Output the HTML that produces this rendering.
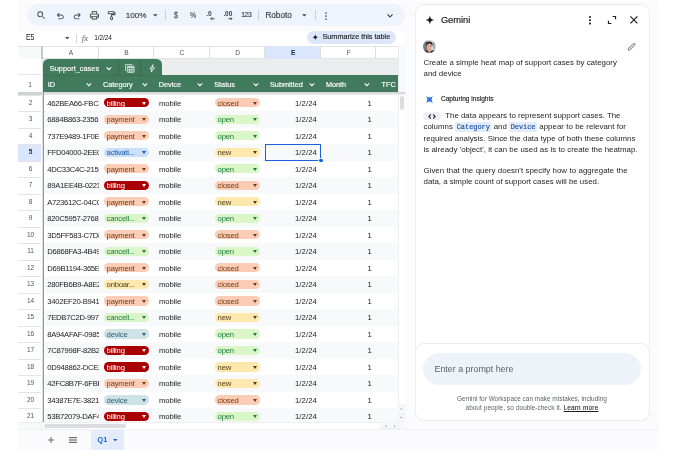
<!DOCTYPE html>
<html lang="en">
<head>
<meta charset="utf-8">
<title>Support cases - Sheets</title>
<style>
*{box-sizing:border-box;margin:0;padding:0}
html,body{width:679px;height:460px;overflow:hidden;background:#fff}
body{position:relative;font-family:"Liberation Sans",sans-serif;color:#1f1f1f;-webkit-font-smoothing:antialiased}
.abs{position:absolute}
#root{position:absolute;left:0;top:0;width:679px;height:460px;will-change:transform;transform:translateZ(0);filter:blur(.3px)}
#app{position:absolute;left:18px;top:.8px;width:641px;height:449.2px;background:#fbfbfd}
#tb{position:absolute;left:26.5px;top:4.2px;width:378px;height:22px;border-radius:11px;background:#eff3fc}
.tbt{position:absolute;top:4.2px;height:22px;line-height:22px;font-size:7.6px;color:#3c4043;white-space:nowrap;-webkit-text-stroke:.15px #3c4043}
.sep{position:absolute;width:1px;background:#cdd1d7}
svg{position:absolute;overflow:visible}
#fbar{position:absolute;left:18px;top:30.5px;width:387px;height:15.8px;background:#fff}
#colh{position:absolute;left:18px;top:46.3px;width:380.4px;height:12.8px;background:#fff;border-top:1px solid #e1e3e6;border-bottom:1px solid #e1e3e6}
.ch{position:absolute;top:46.3px;height:12.8px;line-height:14.6px;font-size:6.6px;color:#50555a;padding-left:1.4px;text-align:center;border-right:1px solid #dcdfe3}
#grid{position:absolute;left:43px;top:59.1px;width:355.4px;height:365.6px;background:#fff;overflow:hidden}
.row{position:absolute;left:18px;width:380.4px;height:16.51px}
.row.band:before{content:"";position:absolute;left:25px;right:0;top:0;bottom:0;background:#f8f9fb}
.rh{position:absolute;left:0;top:0;width:23px;height:16.51px;line-height:18px;text-align:center;font-size:6.2px;padding-left:1px;color:#444;background:#fff;border-top:1px solid #e1e3e6}
.rh.selrow{background:#dae6fb;color:#0b2f66;font-weight:bold}
.t{position:absolute;left:0;width:380px;height:16px}
.cell{position:absolute;top:0;height:16.51px;line-height:16.9px;font-size:7.7px;white-space:nowrap;overflow:hidden;color:#202124}
.id{left:29.3px;width:51.5px;letter-spacing:-0.3px}
.dev{left:141px;width:40px;letter-spacing:-0.08px}
.sub{left:250px;width:49px;text-align:right;letter-spacing:.12px}
.mon{left:310px;width:43.9px;text-align:right}
.chip{position:absolute;top:3.75px;height:9.1px;width:45.4px;border-radius:4.6px;font-size:7.3px;line-height:8.9px;white-space:nowrap}
.ct,.ct2{background:none !important;width:33px;overflow:visible;letter-spacing:-0.22px}
.ct{left:88.6px}
.ct2{left:199.6px}
.rn{left:0;top:-1px;width:24px;text-align:center;font-size:6.5px;color:#50555a;padding-left:1px}
.rn.selrow{color:#0b2f66;font-weight:bold}
.chip i{position:absolute;right:3px;top:3.3px;width:0;height:0;border-left:2.7px solid transparent;border-right:2.7px solid transparent;border-top:3.1px solid currentColor}
.cat{left:85.5px}
.st{left:196.5px}
.c-red{background:#aa0004;color:#fff}
.c-or{background:#fbcdb6;color:#753a12}
.c-bl{background:#cbdff6;color:#1558b0}
.c-gr{background:#daf5c6;color:#1a7a45}
.c-ye{background:#fde9ad;color:#4d3d1d}
.c-cy{background:#cee3e7;color:#2a6173}
.hd{position:absolute;top:75.8px;height:17.5px;line-height:17.6px;font-size:7.3px;color:#fff;white-space:nowrap;-webkit-text-stroke:0.15px #fff}
#gem{position:absolute;left:414.5px;top:4.4px;width:235px;height:416.6px;border-radius:9px;background:#fff;border:1px solid #ebedf1}
.gt{position:absolute;white-space:nowrap;font-size:7.9px;color:#1f1f1f;height:11px;line-height:11px}
code{font-family:"Liberation Mono",monospace;font-size:6.9px;background:#e3ecfb;color:#174ea6;padding:1px 1.5px;border-radius:1.5px;-webkit-text-stroke:.15px #174ea6}
</style>
</head>
<body>
<div id="root">
<div id="app"></div>

<!-- toolbar -->
<div id="tb"></div>
<svg style="left:35.9px;top:9.9px" width="10.6" height="10.6" viewBox="0 0 24 24"><path fill="#444746" d="M15.5 14h-.79l-.28-.27A6.47 6.47 0 0 0 16 9.5 6.5 6.5 0 1 0 9.500 16c1.610 0 3.090-.59 4.230-1.570l.27.280v.79l5 4.990L20.490 19l-4.990-5zm-6 0C7.010 14 5 11.990 5 9.500S7.010 5 9.500 5 14 7.010 14 9.500 11.990 14 9.500 14z"/></svg>
<svg style="left:54.85px;top:10.8px" width="10.5" height="10.5" viewBox="0 0 24 24"><path fill="#444746" d="M7 19v-2h7.100q1.575 0 2.737-1Q18 15 18 13.500T16.837 11Q15.675 10 14.100 10H7.800l2.600 2.600L9 14 4 9l5-5 1.400 1.400L7.800 8h6.300q2.425 0 4.162 1.575Q20 11.150 20 13.500q0 2.350-1.738 3.925Q16.525 19 14.100 19z"/></svg>
<svg style="left:71.9px;top:10.8px" width="10.5" height="10.5" viewBox="0 0 24 24"><path fill="#444746" transform="translate(24,0) scale(-1,1)" d="M7 19v-2h7.100q1.575 0 2.737-1Q18 15 18 13.500T16.837 11Q15.675 10 14.100 10H7.800l2.600 2.600L9 14 4 9l5-5 1.400 1.400L7.800 8h6.300q2.425 0 4.162 1.575Q20 11.150 20 13.500q0 2.350-1.738 3.925Q16.525 19 14.100 19z"/></svg>
<svg style="left:89.3px;top:9.95px" width="10.9" height="10.9" viewBox="0 0 24 24"><path fill="#444746" d="M16 8V5H8v3H6V3h12v5zM4 10h16H6zm14 2.500q.425 0 .712-.288T19 11.500t-.288-.712T18 10.500t-.712.288T17 11.500t.288.712.712.288M16 19v-4H8v4zm2 2H6v-4H2v-6q0-1.275.875-2.137T5 8h14q1.275 0 2.138.863T22 11v6h-4zm2-6v-4q0-.425-.288-.712T19 10H5q-.425 0-.712.288T4 11v4h2v-2h12v2z"/></svg>
<svg style="left:106px;top:10.25px" width="11" height="11" viewBox="0 0 24 24"><path fill="#444746" d="M11 22q-.825 0-1.412-.587T9 20v-4q0-.825.588-1.412T11 14v-2.500q0-.825.588-1.412T13 9.500h6V7h-1q0 .825-.587 1.413T16 9H6q-.825 0-1.412-.587T4 7V4q0-.825.588-1.412T6 2h10q.825 0 1.413.588T18 4v1h1q.825 0 1.413.588T21 7v2.500q0 .825-.587 1.413T19 11.500h-6V14q.825 0 1.413.588T15 16v4q0 .825-.587 1.413T13 22zM6 7h10V4H6zm5 13h2v-4h-2z"/></svg>
<div class="tbt" style="left:125.8px;font-size:8.1px;top:5.2px">100%</div>
<svg style="left:153.4px;top:14.3px" width="4.6" height="2.6" viewBox="0 0 10 5"><path fill="#444746" d="M0 0h10L5 5z"/></svg>
<div class="sep" style="left:165.100px;top:10px;height:10.400px"></div>
<div class="tbt" style="left:173.900px;font-size:8.400px;top:4.200px;transform:scaleX(.84);transform-origin:0 0;-webkit-text-stroke:.1px #3c4043">$</div>
<div class="tbt" style="left:189.900px;font-size:8.400px;top:4px;transform:scaleX(.84);transform-origin:0 0;-webkit-text-stroke:.1px #3c4043">%</div>
<div class="tbt" style="left:206.2px;font-size:6.6px;top:3.1px;font-weight:bold;-webkit-text-stroke:0">.0</div>
<svg style="left:210.300px;top:16.500px" width="4.800" height="3.400" viewBox="0 0 10 8"><path fill="none" stroke="#444746" stroke-width="2.2" d="M10 4H1.500M4.500 .8 1.300 4l3.200 3.200"/></svg>
<div class="tbt" style="left:223.400px;font-size:6.600px;top:3.100px;font-weight:bold;-webkit-text-stroke:0;letter-spacing:-.1px">.00</div>
<svg style="left:228.200px;top:16.500px" width="4.800" height="3.400" viewBox="0 0 10 8"><path fill="none" stroke="#444746" stroke-width="2.2" d="M0 4h8.500M5.500 .8 8.700 4 5.500 7.200"/></svg>
<div class="tbt" style="left:241.200px;font-size:6.700px;top:4.400px;letter-spacing:-.35px">123</div>
<div class="sep" style="left:257.5px;top:10px;height:10.4px"></div>
<div class="tbt" style="left:265.4px;font-size:8.200px;top:5px">Roboto</div>
<svg style="left:302px;top:14.300px" width="4.600" height="2.600" viewBox="0 0 10 5"><path fill="#444746" d="M0 0h10L5 5z"/></svg>
<div class="sep" style="left:315.2px;top:10px;height:10.400px"></div>
<svg style="left:324.800px;top:11.700px" width="2" height="8" viewBox="0 0 2 8"><circle cx="1" cy="1" r=".85" fill="#444746"/><circle cx="1" cy="4" r=".850" fill="#444746"/><circle cx="1" cy="7" r=".850" fill="#444746"/></svg>
<svg style="left:386.600px;top:13.900px" width="6" height="3.600" viewBox="0 0 10 6"><path fill="none" stroke="#444746" stroke-width="1.900" d="M.7.700 5 5 9.300.700"/></svg>

<!-- formula bar -->
<div id="fbar"></div>
<div class="abs" style="left:25.500px;top:32.800px;font-size:8.2px;line-height:10px;color:#202124;transform:scaleX(.84);transform-origin:0 0" id="e5">E5</div>
<svg style="left:64.600px;top:37px" width="4.400" height="2.400" viewBox="0 0 10 5"><path fill="#444746" d="M0 0h10L5 5z"/></svg>
<div class="sep" style="left:76.300px;top:33.800px;height:9.200px;background:#d5d8dc"></div>
<div class="abs" style="left:81.800px;top:33px;font-size:8.600px;line-height:10px;color:#80868b;font-style:italic;font-family:'Liberation Serif',serif;-webkit-text-stroke:.2px #80868b">fx</div>
<div class="abs" style="left:94.200px;top:33.100px;font-size:6.500px;line-height:10px;color:#202124;letter-spacing:-0.100px">1/2/24</div>
<div class="abs" style="left:307.100px;top:30.600px;width:89.200px;height:13px;border-radius:6.500px;background:#dde7fa"></div>
<svg style="left:312.400px;top:33.700px" width="6.600" height="6.600" viewBox="0 0 24 24"><path fill="#1f1f1f" d="M12 1c.6 6.200 4.800 10.400 11 11-6.200.6-10.400 4.800-11 11-.6-6.200-4.800-10.400-11-11 6.200-.6 10.400-4.800 11-11z"/></svg>
<div class="abs" style="left:322.500px;top:32px;font-size:7.250px;line-height:10px;color:#1f1f1f;white-space:nowrap;-webkit-text-stroke:.15px #1f1f1f" id="sum">Summarize this table</div>

<!-- column headers -->
<div id="colh"></div>
<div class="abs" style="left:18px;top:46.300px;width:23px;height:12.800px;background:#f8f9fa;border-top:1px solid #e1e3e6"></div>
<div class="abs" style="left:41px;top:46.300px;width:2.200px;height:13px;background:#c6c9cc"></div>
<div class="ch" style="left:43px;width:55.600px">A</div>
<div class="ch" style="left:98.600px;width:55.400px">B</div>
<div class="ch" style="left:154px;width:55.600px">C</div>
<div class="ch" style="left:209.600px;width:55.700px">D</div>
<div class="ch" style="left:265.300px;width:55.400px;background:#dae6fb;color:#0b2f66;font-weight:bold">E</div>
<div class="ch" style="left:320.700px;width:55.800px">F</div>
<div class="ch" style="left:376.500px;width:21.900px;border-right:none"></div>

<!-- grid -->
<div class="abs" style="left:18px;top:59.100px;width:23px;height:365.600px;background:#fff"></div>
<div id="grid"></div>
<!-- tab row grey -->
<div class="abs" style="left:43px;top:59.100px;width:355.400px;height:16.200px;background:#ecedef"></div>
<!-- green tab + header -->
<div class="abs" style="left:43px;top:59.400px;width:119.400px;height:18px;background:#417a5c;border-radius:5.500px 5.500px 0 0"></div>
<div class="abs" style="left:43px;top:75.300px;width:355.400px;height:17.400px;background:#417a5c"></div>
<div class="abs" style="left:43px;top:75px;width:119.400px;height:.8px;background:#3a7054"></div>
<div class="abs" style="left:118px;top:59.400px;width:.8px;height:16px;background:#386c51"></div>
<div class="abs" style="left:140.400px;top:59.400px;width:.800px;height:16px;background:#386c51"></div>
<div class="hd" style="left:49.800px;top:59.600px;height:16px;line-height:17.400px;font-size:7.400px">Support_cases</div>
<svg style="left:106px;top:66.900px" width="5.800" height="3.200" viewBox="0 0 10 6"><path fill="none" stroke="#fff" stroke-width="2" d="M.7.700 5 5 9.300.700"/></svg>
<svg style="left:124.600px;top:64px" width="9.600" height="8.800" viewBox="0 0 22 20"><g fill="none" stroke="#fff" stroke-width="1.500"><path d="M1.200 15.500V1.200H16.500"/><rect x="5.200" y="4.800" width="15.600" height="14.400" rx="1"/><path stroke-width="1.200" d="M5.200 12.500h15.600M5.200 15.900h15.600M10.400 9v10.200M15.600 9v10.200"/><path stroke-width="2.600" d="M5.200 7.200h15.600"/></g></svg>
<svg style="left:148.600px;top:63.800px" width="6.400" height="8.600" viewBox="0 0 14 18"><path fill="none" stroke="#fff" stroke-width="1.700" stroke-linejoin="round" d="M9 1 2 10h4.500L5 17l7-9H7.500z"/></svg>

<div class="hd" style="left:47.700px">ID</div>
<div class="hd" style="left:103px">Category</div>
<div class="hd" style="left:158.700px">Device</div>
<div class="hd" style="left:214.200px">Status</div>
<div class="hd" style="left:270px">Submitted</div>
<div class="hd" style="left:325.900px">Month</div>
<div class="hd" style="left:381.500px">TFC</div>
<svg class="hc" style="left:86.300px;top:83px" width="5.800" height="3.200" viewBox="0 0 10 6"><path fill="none" stroke="#fff" stroke-width="2" d="M.7.700 5 5 9.300.700"/></svg>
<svg class="hc" style="left:141.900px;top:83px" width="5.800" height="3.200" viewBox="0 0 10 6"><path fill="none" stroke="#fff" stroke-width="2" d="M.7.700 5 5 9.300.700"/></svg>
<svg class="hc" style="left:197.400px;top:83px" width="5.800" height="3.200" viewBox="0 0 10 6"><path fill="none" stroke="#fff" stroke-width="2" d="M.7.700 5 5 9.300.700"/></svg>
<svg class="hc" style="left:253px;top:83px" width="5.800" height="3.200" viewBox="0 0 10 6"><path fill="none" stroke="#fff" stroke-width="2" d="M.7.700 5 5 9.300.700"/></svg>
<svg class="hc" style="left:308.800px;top:83px" width="5.800" height="3.200" viewBox="0 0 10 6"><path fill="none" stroke="#fff" stroke-width="2" d="M.7.700 5 5 9.300.700"/></svg>
<svg class="hc" style="left:364.100px;top:83px" width="5.800" height="3.200" viewBox="0 0 10 6"><path fill="none" stroke="#fff" stroke-width="2" d="M.7.700 5 5 9.300.700"/></svg>

<!-- row header cells for tab row & header row -->
<div class="abs" style="left:18px;top:59.100px;width:23px;height:16.200px;background:#fff;border-bottom:1px solid #e1e3e6"></div>
<div class="abs" style="left:18px;top:75.300px;width:23px;height:17.500px;background:#fff;line-height:19px;text-align:center;font-size:6.500px;color:#50555a;padding-left:1px">1</div>
<!-- freeze bar -->
<div class="abs" style="left:43px;top:92.300px;width:355.400px;height:2.400px;background:linear-gradient(#cfd2d5,#eceef0)"></div><div class="abs" style="left:18px;top:92.200px;width:25px;height:2.500px;background:#cfd1d3"></div>

<div class="row" style="top:94.55px"><div class="rh"></div><div class="chip cat c-red"><i></i></div><div class="chip st c-or"><i></i></div><div class="t" style="top:1.70px"><div class="cell rn">2</div><div class="cell id">462BEA66-FBC4</div><div class="cell ct c-red">billing</div><div class="cell dev">mobile</div><div class="cell ct2 c-or">closed</div><div class="cell sub">1/2/24</div><div class="cell mon">1</div></div></div>
<div class="row band" style="top:111.06px"><div class="rh"></div><div class="chip cat c-or"><i></i></div><div class="chip st c-gr"><i></i></div><div class="t" style="top:1.19px"><div class="cell rn">3</div><div class="cell id">6884B863-2356</div><div class="cell ct c-or">payment</div><div class="cell dev">mobile</div><div class="cell ct2 c-gr">open</div><div class="cell sub">1/2/24</div><div class="cell mon">1</div></div></div>
<div class="row" style="top:127.57px"><div class="rh"></div><div class="chip cat c-or"><i></i></div><div class="chip st c-gr"><i></i></div><div class="t" style="top:1.68px"><div class="cell rn">4</div><div class="cell id">737E9489-1F0E</div><div class="cell ct c-or">payment</div><div class="cell dev">mobile</div><div class="cell ct2 c-gr">open</div><div class="cell sub">1/2/24</div><div class="cell mon">1</div></div></div>
<div class="row band" style="top:144.08px"><div class="rh selrow"></div><div class="chip cat c-bl"><i></i></div><div class="chip st c-ye"><i></i></div><div class="t" style="top:1.17px"><div class="cell rn selrow">5</div><div class="cell id">FFD04000-2EE0</div><div class="cell ct c-bl">activati...</div><div class="cell dev">mobile</div><div class="cell ct2 c-ye">new</div><div class="cell sub">1/2/24</div><div class="cell mon">1</div></div></div>
<div class="row" style="top:160.59px"><div class="rh"></div><div class="chip cat c-or"><i></i></div><div class="chip st c-gr"><i></i></div><div class="t" style="top:1.66px"><div class="cell rn">6</div><div class="cell id">4DC33C4C-2159</div><div class="cell ct c-or">payment</div><div class="cell dev">mobile</div><div class="cell ct2 c-gr">open</div><div class="cell sub">1/2/24</div><div class="cell mon">1</div></div></div>
<div class="row band" style="top:177.10px"><div class="rh"></div><div class="chip cat c-red"><i></i></div><div class="chip st c-or"><i></i></div><div class="t" style="top:1.15px"><div class="cell rn">7</div><div class="cell id">89A1EE4B-0221</div><div class="cell ct c-red">billing</div><div class="cell dev">mobile</div><div class="cell ct2 c-or">closed</div><div class="cell sub">1/2/24</div><div class="cell mon">1</div></div></div>
<div class="row" style="top:193.61px"><div class="rh"></div><div class="chip cat c-or"><i></i></div><div class="chip st c-ye"><i></i></div><div class="t" style="top:1.64px"><div class="cell rn">8</div><div class="cell id">A723612C-04C0</div><div class="cell ct c-or">payment</div><div class="cell dev">mobile</div><div class="cell ct2 c-ye">new</div><div class="cell sub">1/2/24</div><div class="cell mon">1</div></div></div>
<div class="row band" style="top:210.12px"><div class="rh"></div><div class="chip cat c-gr"><i></i></div><div class="chip st c-gr"><i></i></div><div class="t" style="top:1.13px"><div class="cell rn">9</div><div class="cell id">820C5957-2768</div><div class="cell ct c-gr">cancell...</div><div class="cell dev">mobile</div><div class="cell ct2 c-gr">open</div><div class="cell sub">1/2/24</div><div class="cell mon">1</div></div></div>
<div class="row" style="top:226.63px"><div class="rh"></div><div class="chip cat c-or"><i></i></div><div class="chip st c-or"><i></i></div><div class="t" style="top:1.62px"><div class="cell rn">10</div><div class="cell id">3D5FF583-C7DF</div><div class="cell ct c-or">payment</div><div class="cell dev">mobile</div><div class="cell ct2 c-or">closed</div><div class="cell sub">1/2/24</div><div class="cell mon">1</div></div></div>
<div class="row band" style="top:243.14px"><div class="rh"></div><div class="chip cat c-gr"><i></i></div><div class="chip st c-gr"><i></i></div><div class="t" style="top:1.11px"><div class="cell rn">11</div><div class="cell id">D6868FA3-4B49</div><div class="cell ct c-gr">cancell...</div><div class="cell dev">mobile</div><div class="cell ct2 c-gr">open</div><div class="cell sub">1/2/24</div><div class="cell mon">1</div></div></div>
<div class="row" style="top:259.65px"><div class="rh"></div><div class="chip cat c-or"><i></i></div><div class="chip st c-or"><i></i></div><div class="t" style="top:1.60px"><div class="cell rn">12</div><div class="cell id">D69B1194-365E</div><div class="cell ct c-or">payment</div><div class="cell dev">mobile</div><div class="cell ct2 c-or">closed</div><div class="cell sub">1/2/24</div><div class="cell mon">1</div></div></div>
<div class="row band" style="top:276.16px"><div class="rh"></div><div class="chip cat c-ye"><i></i></div><div class="chip st c-or"><i></i></div><div class="t" style="top:1.09px"><div class="cell rn">13</div><div class="cell id">280FB6B9-A8E2</div><div class="cell ct c-ye">onboar...</div><div class="cell dev">mobile</div><div class="cell ct2 c-or">closed</div><div class="cell sub">1/2/24</div><div class="cell mon">1</div></div></div>
<div class="row" style="top:292.67px"><div class="rh"></div><div class="chip cat c-or"><i></i></div><div class="chip st c-or"><i></i></div><div class="t" style="top:1.58px"><div class="cell rn">14</div><div class="cell id">3402EF20-B941</div><div class="cell ct c-or">payment</div><div class="cell dev">mobile</div><div class="cell ct2 c-or">closed</div><div class="cell sub">1/2/24</div><div class="cell mon">1</div></div></div>
<div class="row band" style="top:309.18px"><div class="rh"></div><div class="chip cat c-gr"><i></i></div><div class="chip st c-ye"><i></i></div><div class="t" style="top:1.07px"><div class="cell rn">15</div><div class="cell id">7EDB7C2D-997I</div><div class="cell ct c-gr">cancell...</div><div class="cell dev">mobile</div><div class="cell ct2 c-ye">new</div><div class="cell sub">1/2/24</div><div class="cell mon">1</div></div></div>
<div class="row" style="top:325.69px"><div class="rh"></div><div class="chip cat c-cy"><i></i></div><div class="chip st c-gr"><i></i></div><div class="t" style="top:1.56px"><div class="cell rn">16</div><div class="cell id">8A94AFAF-0985</div><div class="cell ct c-cy">device</div><div class="cell dev">mobile</div><div class="cell ct2 c-gr">open</div><div class="cell sub">1/2/24</div><div class="cell mon">1</div></div></div>
<div class="row band" style="top:342.20px"><div class="rh"></div><div class="chip cat c-red"><i></i></div><div class="chip st c-gr"><i></i></div><div class="t" style="top:1.05px"><div class="cell rn">17</div><div class="cell id">7C87998F-82B2</div><div class="cell ct c-red">billing</div><div class="cell dev">mobile</div><div class="cell ct2 c-gr">open</div><div class="cell sub">1/2/24</div><div class="cell mon">1</div></div></div>
<div class="row" style="top:358.71px"><div class="rh"></div><div class="chip cat c-red"><i></i></div><div class="chip st c-ye"><i></i></div><div class="t" style="top:1.54px"><div class="cell rn">18</div><div class="cell id">0D948862-DCE2</div><div class="cell ct c-red">billing</div><div class="cell dev">mobile</div><div class="cell ct2 c-ye">new</div><div class="cell sub">1/2/24</div><div class="cell mon">1</div></div></div>
<div class="row band" style="top:375.22px"><div class="rh"></div><div class="chip cat c-or"><i></i></div><div class="chip st c-ye"><i></i></div><div class="t" style="top:1.03px"><div class="cell rn">19</div><div class="cell id">42FC8B7F-6FBF</div><div class="cell ct c-or">payment</div><div class="cell dev">mobile</div><div class="cell ct2 c-ye">new</div><div class="cell sub">1/2/24</div><div class="cell mon">1</div></div></div>
<div class="row" style="top:391.73px"><div class="rh"></div><div class="chip cat c-cy"><i></i></div><div class="chip st c-or"><i></i></div><div class="t" style="top:1.52px"><div class="cell rn">20</div><div class="cell id">34387E7E-3821</div><div class="cell ct c-cy">device</div><div class="cell dev">mobile</div><div class="cell ct2 c-or">closed</div><div class="cell sub">1/2/24</div><div class="cell mon">1</div></div></div>
<div class="row band" style="top:408.24px"><div class="rh"></div><div class="chip cat c-red"><i></i></div><div class="chip st c-gr"><i></i></div><div class="t" style="top:1.01px"><div class="cell rn">21</div><div class="cell id">53B72079-DAF4</div><div class="cell ct c-red">billing</div><div class="cell dev">mobile</div><div class="cell ct2 c-gr">open</div><div class="cell sub">1/2/24</div><div class="cell mon">1</div></div></div>

<!-- row header / grid divider -->
<div class="abs" style="left:41.500px;top:59.100px;width:1px;height:363px;background:#dfe1e4"></div>
<div class="abs" style="left:42.700px;top:92px;width:1.200px;height:330.100px;background:#7f9f90"></div>

<!-- selection -->
<div class="abs" style="left:265px;top:143.700px;width:56.400px;height:17.300px;border:1.100px solid #1a63d6"></div>
<div class="abs" style="left:318.4px;top:158.3px;width:5.2px;height:5.2px;border-radius:2.6px;background:#1a63d6;border:.4px solid #fff"></div>

<!-- scrollbars -->
<div class="abs" style="left:398.400px;top:46.300px;width:6.600px;height:46.400px;background:#f8f9fa;border-left:1px solid #e9ebee"></div>
<div class="abs" style="left:398.400px;top:92.300px;width:6.600px;height:2.400px;background:linear-gradient(#cfd2d5,#eceef0)"></div>
<div class="abs" style="left:398.400px;top:94.900px;width:6.600px;height:327.200px;background:#fff;border-left:1px solid #eceef0"></div>
<div class="abs" style="left:400px;top:95.600px;width:4.300px;height:14.100px;border-radius:2.200px;background:#dadce0"></div>
<div class="abs" style="left:18px;top:422.100px;width:380.400px;height:7.300px;background:#fff;border-top:1px solid #eceef0"></div>
<div class="abs" style="left:18px;top:422.100px;width:24px;height:7.300px;background:#f8f9fa;border-top:1px solid #eceef0;border-right:1px solid #e9ebee"></div>
<div class="abs" style="left:44.200px;top:424.200px;width:81.600px;height:4.100px;border-radius:2.100px;background:#dadce0"></div>
<div class="abs" style="left:398.400px;top:405px;width:6.600px;height:8.800px;border:1px solid #eef0f2;background:#f8f9fa"></div>
<div class="abs" style="left:398.400px;top:413.500px;width:6.600px;height:8.800px;border:1px solid #eef0f2;background:#f8f9fa"></div>
<div class="abs" style="left:398.400px;top:422.100px;width:6.600px;height:7.300px;background:#f8f9fa"></div>
<svg style="left:400.400px;top:408.300px" width="2.600" height="1.700" viewBox="0 0 10 6"><path fill="#9aa0a6" d="M0 6h10L5 0z"/></svg>
<svg style="left:400.400px;top:417.400px" width="2.600" height="1.700" viewBox="0 0 10 6"><path fill="#9aa0a6" d="M0 0h10L5 6z"/></svg>
<div class="abs" style="left:381.100px;top:422.100px;width:9.500px;height:7.300px;border:1px solid #eef0f2;background:#f8f9fa"></div>
<div class="abs" style="left:390.100px;top:422.100px;width:8.500px;height:7.300px;border:1px solid #eef0f2;background:#f8f9fa"></div>
<svg style="left:384.900px;top:424.700px" width="1.700" height="2.600" viewBox="0 0 6 10"><path fill="#9aa0a6" d="M6 0v10L0 5z"/></svg>
<svg style="left:393.800px;top:424.700px" width="1.700" height="2.600" viewBox="0 0 6 10"><path fill="#9aa0a6" d="M0 0v10L6 5z"/></svg>

<!-- bottom bar -->
<div class="abs" style="left:18px;top:429.200px;width:641px;height:.9px;background:#eef0f3"></div>
<svg style="left:48.300px;top:437.300px" width="6" height="6" viewBox="0 0 10 10"><path fill="none" stroke="#444746" stroke-width="1.300" d="M5 0v10M0 5h10"/></svg>
<svg style="left:69.300px;top:437.400px" width="8" height="6" viewBox="0 0 12 9"><path fill="none" stroke="#444746" stroke-width="1.400" d="M0 1h12M0 4.500h12M0 8h12"/></svg>
<div class="abs" style="left:91px;top:430px;width:32.900px;height:19.800px;background:#e3ecfa"></div>
<div class="abs" style="left:97.600px;top:435.300px;font-size:7.200px;line-height:10px;color:#1a5fc8;font-weight:bold" id="q1">Q1</div>
<svg style="left:113.300px;top:439.100px" width="4.500" height="2.300" viewBox="0 0 10 5"><path fill="#1a5fc8" d="M0 0h10L5 5z"/></svg>

<!-- Gemini panel -->
<div id="gem"></div>
<div class="abs" style="left:414.500px;top:343.300px;width:235px;height:77.700px;border-radius:9px;border:1px solid #ebedf1;background:#fff"></div>
<svg style="left:424.900px;top:15.300px" width="9.800" height="9.800" viewBox="0 0 24 24"><path fill="#1f1f1f" d="M12 1C13 8 16 11 23 12 16 13 13 16 12 23 11 16 8 13 1 12 8 11 11 8 12 1z"/></svg>
<div class="abs" style="left:440.900px;top:14px;font-size:9.300px;line-height:12px;color:#1f1f1f;-webkit-text-stroke:.2px #1f1f1f;white-space:nowrap">Gemini</div>
<svg style="left:589px;top:15.700px" width="2" height="8.600" viewBox="0 0 2 8.600"><circle cx="1" cy="1" r="1.050" fill="#1f1f1f"/><circle cx="1" cy="4.300" r="1.050" fill="#1f1f1f"/><circle cx="1" cy="7.600" r="1.050" fill="#1f1f1f"/></svg>
<svg style="left:608px;top:16px" width="8" height="8" viewBox="0 0 10 10"><path fill="none" stroke="#1f1f1f" stroke-width="1.500" d="M5.800.6h3.600v3.600M4.200 9.400H.6V5.800"/></svg>
<svg style="left:630.200px;top:16.300px" width="7.800" height="7.800" viewBox="0 0 10 10"><path fill="none" stroke="#1f1f1f" stroke-width="1.500" d="M.5.500l9 9M9.500.5l-9 9"/></svg>
<!-- avatar -->
<div class="abs" style="left:423.100px;top:39.900px;width:13.300px;height:13.300px;border-radius:50%;overflow:hidden"><svg style="left:0;top:0" width="13.300" height="13.300" viewBox="0 0 26 26"><g><rect width="26" height="26" fill="#cfd6dc"/><rect width="8.500" height="26" fill="#777b80"/><rect x="20" y="3" width="3" height="14" fill="#9aa1a8"/><ellipse cx="12.500" cy="8.500" rx="6.300" ry="5.500" fill="#2b2724"/><ellipse cx="12.600" cy="13.200" rx="4.900" ry="6.200" fill="#eeaaa6"/><rect x="10.200" y="17" width="4.800" height="9" fill="#e79d98"/><path d="M0 26V21.500Q5 19 9.800 21L12 26z" fill="#2c2c2e"/><path d="M26 26V21.500Q21 19 15.400 21L13.400 26z" fill="#3a3a3d"/><circle cx="14.600" cy="11.800" r=".9" fill="#4a2f28"/><circle cx="10.600" cy="11.800" r=".8" fill="#6a4038"/><path d="M9.800 19.500 12.600 24 15.400 19.500" fill="none" stroke="#c9a24a" stroke-width=".8"/></g></svg></div>
<svg style="left:627.400px;top:42px" width="9.400" height="9.400" viewBox="0 0 24 24"><path fill="none" stroke="#8a8f94" stroke-width="2.600" stroke-linejoin="round" d="M3 21l1-4.500L16.500 4a2.100 2.100 0 0 1 3 0l.5.500a2.100 2.100 0 0 1 0 3L7.500 20z"/></svg>
<div class="gt" id="u1" style="left:423.500px;top:57.100px">Create a simple heat map of support cases by category</div>
<div class="gt" id="u2" style="left:423.500px;top:68.300px">and device</div>
<svg style="left:425.400px;top:95px" width="9" height="9" viewBox="0 0 24 24"><path fill="#3b78e7" d="M2 2C8 7.500 16 7.500 22 2 16.500 8 16.500 16 22 22 16 16.500 8 16.500 2 22 7.500 16 7.500 8 2 2z"/></svg>
<div class="abs" style="left:440.900px;top:94px;font-size:6.6px;line-height:10px;color:#1f1f1f;white-space:nowrap;-webkit-text-stroke:.15px #1f1f1f" id="cap">Capturing insights</div>
<div class="abs" style="left:423.400px;top:111.500px;width:17.400px;height:8.800px;border-radius:4.400px;background:#eceff3"></div>
<svg style="left:428.400px;top:113.500px" width="8" height="4.800" viewBox="0 0 16 10"><path fill="none" stroke="#1f1f1f" stroke-width="2.300" d="M5.500 1 1.500 5l4 4M10.500 1l4 4-4 4"/></svg>
<div class="gt" id="p1" style="left:445.200px;top:110.100px">The data appears to represent support cases. The</div>
<div class="gt" id="p2" style="word-spacing:0.15px;left:423.500px;top:121.400px">columns <code>Category</code> and <code>Device</code> appear to be relevant for</div>
<div class="gt" id="p3" style="word-spacing:0.1px;left:423.500px;top:132.700px">required analysis. Since the data type of both these columns</div>
<div class="gt" id="p4" style="word-spacing:0.08px;left:423.500px;top:144px">is already 'object', it can be used as is to create the heatmap.</div>
<div class="gt" id="p5" style="word-spacing:0.28px;left:423.500px;top:165.300px">Given that the query doesn't specify how to aggregate the</div>
<div class="gt" id="p6" style="word-spacing:-0.08px;left:423.500px;top:176.200px">data, a simple count of support cases will be used.</div>

<div class="abs" style="left:423px;top:352.600px;width:218px;height:32.500px;border-radius:16.300px;background:#eef2f9"></div>
<div class="abs" style="left:434.500px;top:362.500px;font-size:8.9px;line-height:12px;color:#5f6368;white-space:nowrap" id="prompt">Enter a prompt here</div>
<div class="abs" style="left:414.500px;top:394px;width:235px;text-align:center;font-size:6.46px;line-height:9px;color:#5f6368;white-space:nowrap" id="d1">Gemini for Workspace can make mistakes, including</div>
<div class="abs" style="left:414.500px;top:403px;width:235px;text-align:center;font-size:6.46px;line-height:9px;color:#5f6368;white-space:nowrap;word-spacing:.3px" id="d2">about people, so double-check it. <span style="color:#1f1f1f;text-decoration:underline;text-underline-offset:1.4px;text-decoration-thickness:.6px;-webkit-text-stroke:.1px #1f1f1f;letter-spacing:.15px">Learn more</span></div>
</div>
</body>
</html>
